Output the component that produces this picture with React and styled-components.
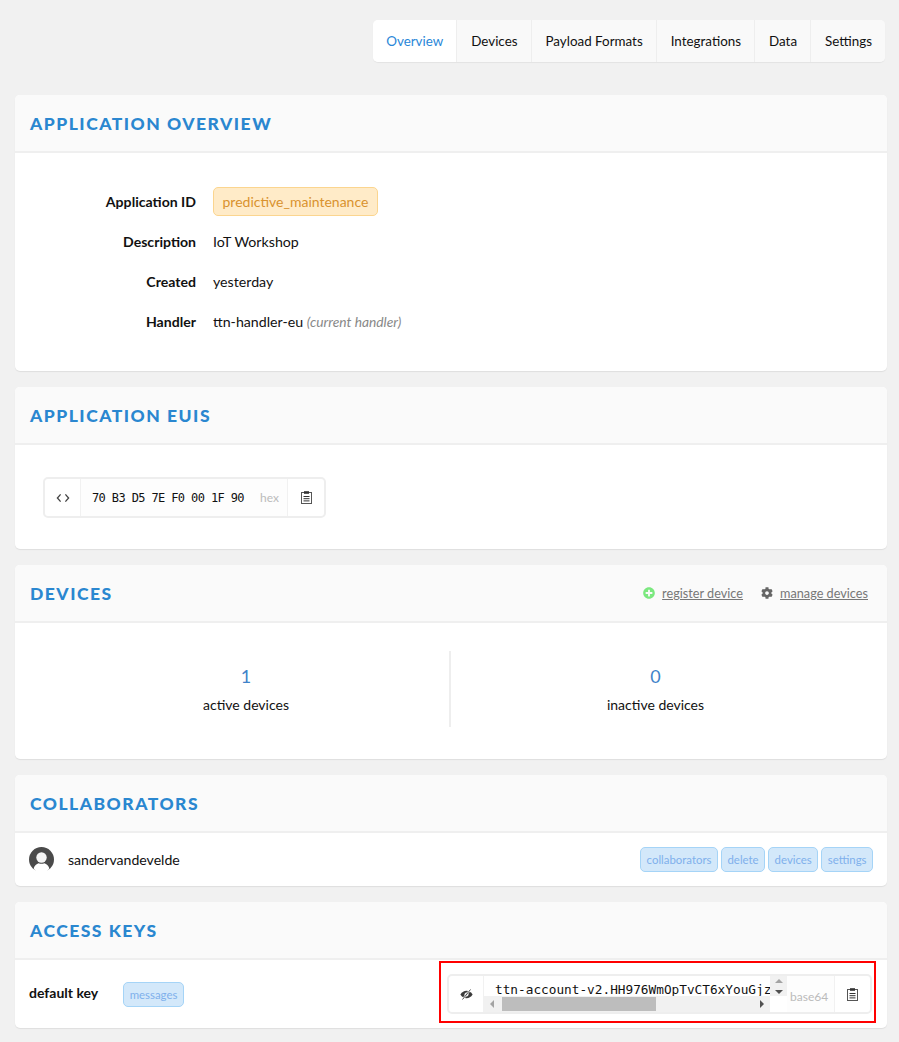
import React from 'react';
import styled, { createGlobalStyle } from 'styled-components';
import { FaCog, FaPlusCircle } from 'react-icons/fa';

const GlobalStyle = createGlobalStyle`
  html, body {
    margin: 0;
    background: #f1f1f1;
    font-family: Lato, "Open Sans", sans-serif;
    font-size: 14px;
    color: #111;
  }
  * { box-sizing: border-box; }
`;

const Page = styled.div`
  width: 899px;
  height: 1042px;
  overflow: hidden;
  padding: 20px 12px 0 15px;
`;

const Tabs = styled.div`
  display: flex;
  width: max-content;
  margin: 0 2px 33px auto;
  border-radius: 5px;
  background: #f9f9f9;
  box-shadow: 0 1px 1px rgba(0, 0, 0, 0.06);
  overflow: hidden;
`;

const Tab = styled.div`
  height: 42px;
  line-height: 42px;
  padding: 0 13px 0 ${p => (p.$active ? 13 : 14)}px;
  font-size: 13.4px;
  color: ${p => (p.$active ? '#2a87d8' : '#111')};
  background: ${p => (p.$active ? '#fff' : '#f9f9f9')};
  border-left: ${p => (p.$active ? 'none' : '1px solid #eeeeee')};
`;

const Card = styled.section`
  background: #fff;
  border-radius: 5px;
  box-shadow: 0 1px 1px rgba(0, 0, 0, 0.08);
  margin-bottom: 16px;
  overflow: hidden;
`;

const CardHeader = styled.header`
  display: flex;
  align-items: center;
  justify-content: space-between;
  height: 58px;
  padding: 0 19px 0 15px;
  background: #fafafa;
  border-bottom: 2px solid #efefef;
`;

const Title = styled.h2`
  margin: 1px 0 0;
  font-family: Lato, sans-serif;
  font-size: 17.5px;
  font-weight: 900;
  letter-spacing: 1.5px;
  text-transform: uppercase;
  color: #2a87d0;
`;

const Overview = styled.div`
  display: grid;
  grid-template-columns: 181px 1fr;
  column-gap: 17px;
  grid-auto-rows: 40px;
  align-items: center;
  padding: 28px 0 30px;
`;

const Label = styled.div`
  text-align: right;
  font-weight: 700;
  font-size: 14.1px;
`;

const Value = styled.div`
  font-size: 14.2px;
`;

const Muted = styled.em`
  font-size: 13.8px;
  color: #888;
`;

const AppId = styled.span`
  display: inline-block;
  height: 29px;
  line-height: 28px;
  padding: 0 8.5px;
  font-size: 14px;
  color: #d9922e;
  background: #ffebc8;
  border: 1px solid #fbd58f;
  border-radius: 5px;
`;

const EuiBody = styled.div`
  padding: 32px 28px 31px;
`;

const KeyBox = styled.div`
  display: flex;
  align-items: stretch;
  width: ${p => p.$width}px;
  height: ${p => p.$height}px;
  background: #fff;
  border: 2px solid #eeeeee;
  border-radius: 5px;
  overflow: hidden;
`;

const IconCell = styled.div`
  display: flex;
  flex: none;
  align-items: center;
  justify-content: center;
  width: ${p => p.$width}px;
  color: #444;
  border-${p => p.$side}: 1px solid #f1f1f1;
`;

const HexValue = styled.div`
  flex: 1;
  display: flex;
  align-items: center;
  justify-content: space-between;
  padding: 0 8px 0 11px;
  background: #fdfdfd;
  font-family: "DejaVu Sans Mono", monospace;
  font-size: 12px;
  letter-spacing: -0.62px;
  color: #111;
`;

const Format = styled.span`
  font-family: Lato, sans-serif;
  font-size: 12px;
  letter-spacing: 0;
  color: #bbb;
`;

const Actions = styled.div`
  display: flex;
  align-items: center;
  gap: 18px;
  font-size: 12.7px;
`;

const Action = styled.a`
  display: flex;
  align-items: center;
  gap: 7px;
  color: #777;
  svg { color: ${p => p.$iconColor}; }
  span { text-decoration: underline; }
`;

const Stats = styled.div`
  display: grid;
  grid-template-columns: 408px 410px;
  padding: 28px 0 32px 27px;
`;

const Stat = styled.div`
  height: 76px;
  padding-top: 14px;
  text-align: center;
  & + & {
    margin-left: -1px;
    border-left: 2px solid #eeeeee;
  }
`;

const StatNumber = styled.div`
  font-size: 18px;
  line-height: 22px;
  color: #3f83c9;
  margin-bottom: 9px;
`;

const Row = styled.div`
  display: flex;
  align-items: center;
  justify-content: space-between;
  height: ${p => p.$height}px;
  padding: ${p => p.$padding};
`;

const Person = styled.div`
  display: flex;
  align-items: center;
  gap: 14px;
  font-size: 14.1px;
`;

const Tags = styled.div`
  display: flex;
  gap: 3px;
`;

const Tag = styled.span`
  display: block;
  height: 25px;
  line-height: 24px;
  padding: 0 5.5px;
  font-size: 11.4px;
  font-weight: 400;
  color: #7fb0ec;
  background: #d3e8fa;
  border: 1px solid #a5d4f7;
  border-radius: 5px;
`;

const KeyName = styled.div`
  display: flex;
  align-items: center;
  gap: 25px;
`;

const KeyLabel = styled.span`
  margin-bottom: 4px;
  font-weight: 700;
  font-size: 14px;
`;

const Highlight = styled.div`
  padding: 11px 2px 7px 6px;
  border: 2px solid #f00;
  margin-bottom: 4px;
`;

const ScrollArea = styled.div`
  flex: none;
  width: 303px;
  display: flex;
  flex-direction: column;
  background: #fff;
`;

const CodeRow = styled.div`
  display: flex;
  height: 20px;
  flex: none;
  min-height: 0;
`;

const Code = styled.div`
  flex: 1;
  overflow: hidden;
  padding: 5px 0 0 11px;
  white-space: nowrap;
  font-family: "DejaVu Sans Mono", monospace;
  font-size: 12.75px;
  line-height: 17px;
  color: #111;
`;

const ScrollV = styled.div`
  flex: none;
  width: 17px;
  display: flex;
  flex-direction: column;
  align-items: center;
  justify-content: space-between;
  padding: 3px 0 2px;
  background: #f1f1f1;
`;

const ScrollH = styled.div`
  display: flex;
  align-items: center;
  height: 17px;
  width: 286px;
  background: #f1f1f1;
`;

const Thumb = styled.div`
  height: 14px;
  width: 154px;
  margin: 0 105px 0 18px;
  background: #bdbdbd;
`;

const ArrowV = styled.i`
  width: 0;
  height: 0;
  border-left: 4px solid transparent;
  border-right: 4px solid transparent;
  ${p => (p.$up ? 'border-bottom: 4px solid #a3a3a3;' : 'border-top: 4px solid #505050;')}
`;

const ArrowH = styled.i`
  flex: none;
  width: 0;
  height: 0;
  border-top: 4px solid transparent;
  border-bottom: 4px solid transparent;
  ${p => (p.$left
    ? 'border-right: 4px solid #a3a3a3; margin-left: 6px; margin-right: -10px;'
    : 'border-left: 4px solid #505050; margin-left: -1px;')}
`;

const Base64 = styled.div`
  flex: 1;
  display: flex;
  align-items: center;
  padding: 4px 0 0 3px;
  background: #fdfdfd;
`;

const Clipboard = () => (
  <svg width="11" height="13" viewBox="0 0 11 13" fill="none" stroke="#555" strokeWidth="1">
    <rect x="0.5" y="1.5" width="10" height="11" />
    <rect x="3" y="0.2" width="5" height="2.6" fill="#333" stroke="none" />
    <path d="M2.5 5.5h6M2.5 7.7h6M2.5 9.9h6" stroke="#333" />
  </svg>
);

const CodeIcon = () => (
  <svg width="14" height="10" viewBox="0 0 14 10" fill="none" stroke="#444" strokeWidth="1.3">
    <path d="M4.6 1.4 1.4 5l3.2 3.6M9.4 1.4 12.6 5 9.4 8.6" />
  </svg>
);

const EyeOff = () => (
  <svg width="13" height="11" viewBox="0 0 13 11" fill="none">
    <path d="M0.4 5.5C2 3 4.1 1.8 6.5 1.8S11 3 12.6 5.5C11 8 8.9 9.2 6.500 9.200S2 8 .4 5.500z" fill="#3a3a3a" />
    <circle cx="6.5" cy="5.5" r="2" fill="#fff" />
    <circle cx="6.5" cy="5.5" r="1" fill="#3a3a3a" />
    <path d="M10.5 .5 2.5 10.5" stroke="#fff" strokeWidth="2" />
    <path d="M10.5 .5 2.5 10.5" stroke="#3a3a3a" strokeWidth="0.9" />
  </svg>
);

const Avatar = () => (
  <svg width="25" height="25" viewBox="0 0 25 25">
    <circle cx="12.5" cy="12.5" r="12.5" fill="#4a4a4a" />
    <circle cx="12.5" cy="10.5" r="5.2" fill="#f4f4f4" />
    <path d="M4.6 21.5C5.500 18.500 7.500 17 9.600 16.200c1.800 .8 4 .8 5.800 0 2.100 .8 4.100 2.300 5 5.300L17.500 25h-10z" fill="#fff" />
  </svg>
);

const tabs = [
  { label: 'Overview', active: true },
  { label: 'Devices' },
  { label: 'Payload Formats' },
  { label: 'Integrations' },
  { label: 'Data' },
  { label: 'Settings' },
];

const rights = ['collaborators', 'delete', 'devices', 'settings'];

export default function App() {
  return (
    <Page>
      <GlobalStyle />
      <Tabs>
        {tabs.map(t => (
          <Tab key={t.label} $active={t.active}>{t.label}</Tab>
        ))}
      </Tabs>

      <Card>
        <CardHeader><Title>Application Overview</Title></CardHeader>
        <Overview>
          <Label>Application ID</Label>
          <Value><AppId>predictive_maintenance</AppId></Value>
          <Label>Description</Label>
          <Value>IoT Workshop</Value>
          <Label>Created</Label>
          <Value>yesterday</Value>
          <Label>Handler</Label>
          <Value>ttn-handler-eu <Muted>(current handler)</Muted></Value>
        </Overview>
      </Card>

      <Card>
        <CardHeader><Title>Application EUIs</Title></CardHeader>
        <EuiBody>
          <KeyBox $width={283} $height={41}>
            <IconCell $width={36} $side="right"><CodeIcon /></IconCell>
            <HexValue>
              70 B3 D5 7E F0 00 1F 90
              <Format>hex</Format>
            </HexValue>
            <IconCell $width={37} $side="left"><Clipboard /></IconCell>
          </KeyBox>
        </EuiBody>
      </Card>

      <Card>
        <CardHeader>
          <Title>Devices</Title>
          <Actions>
            <Action $iconColor="#7be87f"><FaPlusCircle size={12} /><span>register device</span></Action>
            <Action $iconColor="#666"><FaCog size={12} /><span>manage devices</span></Action>
          </Actions>
        </CardHeader>
        <Stats>
          <Stat>
            <StatNumber>1</StatNumber>
            active devices
          </Stat>
          <Stat>
            <StatNumber>0</StatNumber>
            inactive devices
          </Stat>
        </Stats>
      </Card>

      <Card>
        <CardHeader><Title>Collaborators</Title></CardHeader>
        <Row $height={53} $padding="0 14px">
          <Person>
            <Avatar />
            sandervandevelde
          </Person>
          <Tags>
            {rights.map(r => <Tag key={r}>{r}</Tag>)}
          </Tags>
        </Row>
      </Card>

      <Card>
        <CardHeader><Title>Access Keys</Title></CardHeader>
        <Row $height={68} $padding="0 11px 0 14px">
          <KeyName>
            <KeyLabel>default key</KeyLabel>
            <Tag>messages</Tag>
          </KeyName>
          <Highlight>
            <KeyBox $width={425} $height={40}>
              <IconCell $width={35} $side="right"><EyeOff /></IconCell>
              <ScrollArea>
                <CodeRow>
                  <Code>ttn-account-v2.HH976WmOpTvCT6xYouGjz</Code>
                  <ScrollV><ArrowV $up /><ArrowV /></ScrollV>
                </CodeRow>
                <ScrollH>
                  <ArrowH $left />
                  <Thumb />
                  <ArrowH />
                </ScrollH>
              </ScrollArea>
              <Base64><Format>base64</Format></Base64>
              <IconCell $width={36} $side="left"><Clipboard /></IconCell>
            </KeyBox>
          </Highlight>
        </Row>
      </Card>
    </Page>
  );
}
